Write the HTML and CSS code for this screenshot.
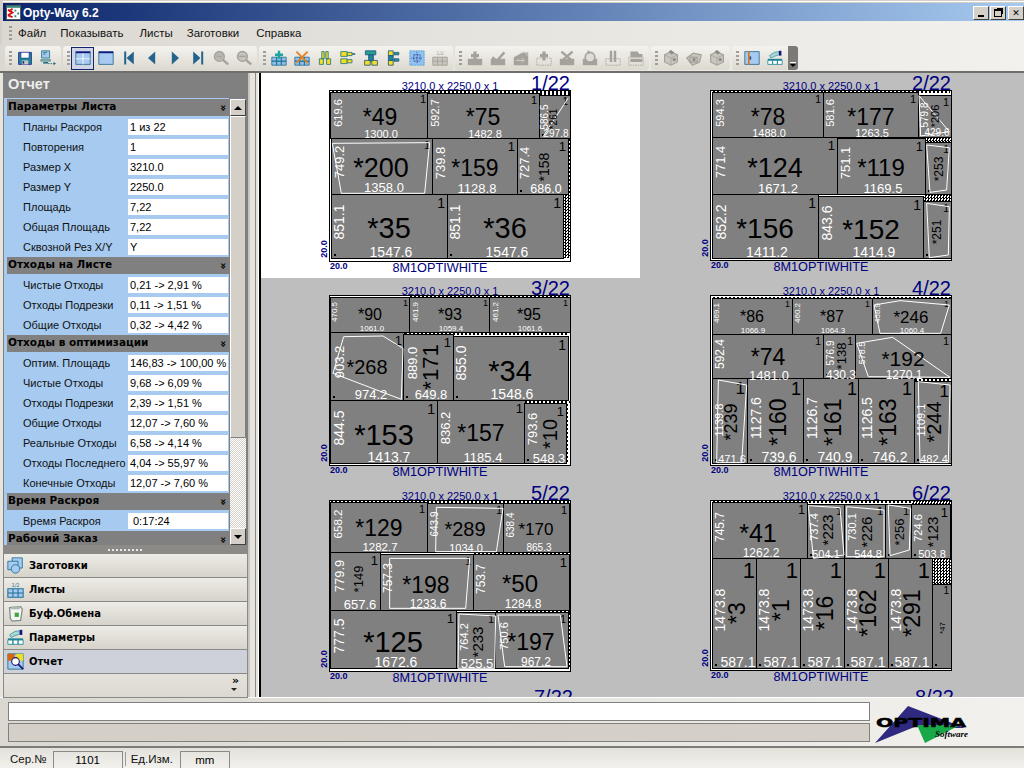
FILE: index.html
```html
<!DOCTYPE html>
<html lang="ru">
<head>
<meta charset="utf-8">
<title>Opty-Way 6.2</title>
<link rel="stylesheet" href="styles.css">
</head>
<body>
<svg class="sprite" width="0" height="0">
  <defs>
    <symbol id="i-save" viewBox="0 0 20 20"><path d="M2 3h16v15H2z" fill="#1f8496" stroke="#1a1a8c"/><path d="M5 3h10v7H5z" fill="#fff" stroke="#1a1a8c" stroke-width=".6"/><path d="M6 13h8v5H6z" fill="#c9c9c9"/><path d="M7 14h2v3H7z" fill="#1a1a8c"/></symbol>
    <symbol id="i-export" viewBox="0 0 20 20"><path d="M2 1h10v9H2z" fill="#a6caf0" stroke="#1f6f80"/><path d="M4 3h5M4 5h3" stroke="#1f6f80"/><path d="M1 12h12v2H1z" fill="#a0b8c0" stroke="#1f6f80" stroke-width=".7"/><path d="M4 15h6v2H4z" fill="#1f6f80"/><path d="M10 17h2M13 17h2M16 17h2" stroke="#1f6f80"/><path d="M17 15l3 2-3 2z" fill="#1f6f80"/></symbol>
    <symbol id="i-grid" viewBox="0 0 20 20"><path d="M1 2h18v16H1z" fill="#a6caf0" stroke="#24648c"/><path d="M1 2h18v2H1z" fill="#141480"/><path d="M10 4v14M1 11h18" stroke="#fff"/></symbol>
    <symbol id="i-single" viewBox="0 0 20 20"><path d="M1 2h18v16H1z" fill="#a6caf0" stroke="#24648c"/><path d="M1 2h18v2H1z" fill="#141480"/></symbol>
    <symbol id="i-first" viewBox="0 0 20 20"><path d="M4 2h2.500v16H4zM16 2v16L7 10z" fill="#24648c"/></symbol>
    <symbol id="i-prev" viewBox="0 0 20 20"><path d="M14 2v16L5 10z" fill="#24648c"/></symbol>
    <symbol id="i-next" viewBox="0 0 20 20"><path d="M6 2v16l9-8z" fill="#24648c"/></symbol>
    <symbol id="i-last" viewBox="0 0 20 20"><path d="M4 2v16l9-8zM14 2h2.500v16H14z" fill="#24648c"/></symbol>
    <symbol id="i-zoomin" viewBox="0 0 20 20"><circle cx="8" cy="8" r="6" fill="#c9c6be" stroke="#a5a29b" stroke-width="2"/><path d="M5 8h6" stroke="#a5a29b" stroke-width="2"/><path d="M5 5h6v6H5z" fill="none" stroke="#a5a29b"/><path d="M12 12l7 6" stroke="#a5a29b" stroke-width="3"/></symbol>
    <symbol id="i-zoomout" viewBox="0 0 20 20"><circle cx="8" cy="8" r="6" fill="#c9c6be" stroke="#a5a29b" stroke-width="2"/><path d="M4 8h8" stroke="#a5a29b" stroke-width="2"/><path d="M12 12l7 6" stroke="#a5a29b" stroke-width="3"/></symbol>
    <symbol id="i-add" viewBox="0 0 20 20"><path d="M1 9h6v5H1zM7 9h6v5H7zM13 9h6v5h-6zM1 14h6v5H1zM7 14h6v5H7zM13 14h6v5h-6z" fill="#8fbfe6" stroke="#1f6f96"/><path d="M10 1v10M5 6h10" stroke="#1fa5a0" stroke-width="3"/></symbol>
    <symbol id="i-del" viewBox="0 0 20 20"><path d="M1 9h6v5H1zM7 9h6v5H7zM13 9h6v5h-6zM1 14h6v5H1zM7 14h6v5H7zM13 14h6v5h-6z" fill="#8fbfe6" stroke="#1f6f96"/><path d="M3 2l14 14M17 2L3 16" stroke="#e8801c" stroke-width="2.200"/></symbol>
    <symbol id="i-cols" viewBox="0 0 20 20"><path d="M6 2h3v9H6zM11 2h3v9h-3zM3 11h5v7H3zM12 11h5v7h-5z" fill="#f0e020" stroke="#1f6f80"/></symbol>
    <symbol id="i-rows" viewBox="0 0 20 20"><path d="M1 2h8v6H1zM1 11h8v6H1z" fill="#f0e020" stroke="#1f6f80"/><path d="M9 3h6v4H9zM9 12h6v4H9z" fill="#f0e020" stroke="#1f6f80"/><path d="M15 4h4v2h-4z" fill="#1f6f80"/></symbol>
    <symbol id="i-cut1" viewBox="0 0 20 20"><path d="M3 1h13v5H3z" fill="#22a090" stroke="#1f4f80"/><path d="M7 6h6v8H7z" fill="#1f8496" stroke="#1f4f80"/><path d="M2 13h7v6H2zM11 13h7v6h-7z" fill="#f0e020" stroke="#1f4f80"/></symbol>
    <symbol id="i-cut2" viewBox="0 0 20 20"><path d="M3 1h6v6H3zM3 13h6v6H3z" fill="#f0e020" stroke="#1f4f80"/><path d="M3 7h6v6H3z" fill="#1f8496" stroke="#1f4f80"/><path d="M10 3h6v3h-6zM10 11h6v3h-6z" fill="#22a090" stroke="#1f4f80"/></symbol>
    <symbol id="i-dots" viewBox="0 0 20 20"><path d="M1 1h18v18H1z" fill="#8fc4f0"/><path d="M1 1h18v18H1z" fill="none" stroke="#2b7cc4" stroke-width="1" stroke-dasharray="1 1"/><path d="M10 3v14M3 10h14M6 6v8M14 6v8M6 6h8M6 14h8" stroke="#141480" stroke-dasharray="1 1"/></symbol>
    <symbol id="i-half" viewBox="0 0 20 20"><text x="10" y="6.500" class="ic-txt">1/2</text><path d="M1 9h18v10H1zM7 9v10M13 9v10M1 14h18" fill="#c9c6be" stroke="#a5a29b" stroke-width="1.200"/></symbol>
    <symbol id="g-plus" viewBox="0 0 20 20"><path d="M1 11h18v8H1z" fill="#a5a29b"/><path d="M10 2v11M5 7h10" stroke="#a5a29b" stroke-width="4"/></symbol>
    <symbol id="g-check" viewBox="0 0 20 20"><path d="M1 11h18v8H1z" fill="#a5a29b"/><path d="M3 9l5 5L18 3" fill="none" stroke="#a5a29b" stroke-width="3"/></symbol>
    <symbol id="g-arrow" viewBox="0 0 20 20"><path d="M1 9L12 3l7 0v16H1z" fill="#a5a29b"/><path d="M4 13h9M11 10l3 3-3 3" fill="none" stroke="#dfdcd5"/><path d="M9 3l6-1 3 5" fill="none" stroke="#dfdcd5"/></symbol>
    <symbol id="g-dplus" viewBox="0 0 20 20"><path d="M1 10h18v9H1z" fill="none" stroke="#a5a29b" stroke-dasharray="2 1"/><path d="M10 2v11M5 7h10" stroke="#a5a29b" stroke-width="4"/></symbol>
    <symbol id="g-x" viewBox="0 0 20 20"><path d="M1 11h18v8H1z" fill="#a5a29b"/><path d="M3 2l14 12M17 2L3 14" stroke="#a5a29b" stroke-width="3"/></symbol>
    <symbol id="g-rot" viewBox="0 0 20 20"><path d="M1 11h18v8H1z" fill="#a5a29b"/><circle cx="10" cy="9" r="6" fill="#dfdcd5" stroke="#a5a29b" stroke-width="2"/><path d="M7 0l4 3-4 2z" fill="#a5a29b"/></symbol>
    <symbol id="g-bars" viewBox="0 0 20 20"><path d="M1 11h18v8H1z" fill="none" stroke="#a5a29b" stroke-dasharray="2 1"/><path d="M6 1h3v14H6zM11 1h3v14h-3z" fill="#a5a29b"/></symbol>
    <symbol id="g-hbars" viewBox="0 0 20 20"><path d="M1 9h18v10H1z" fill="none" stroke="#a5a29b" stroke-dasharray="2 1"/><path d="M3 2h9l2 3h4v4H3zM3 11h15v4H3z" fill="#a5a29b"/></symbol>
    <symbol id="g-cube" viewBox="0 0 20 20"><path d="M2 6l8-4 8 4v9l-8 4-8-4z" fill="#c9c6be" stroke="#a5a29b" stroke-width="1.500"/><path d="M2 6l8 4 8-4M10 10v9" fill="none" stroke="#a5a29b"/><path d="M7 2l3-2 4 3-3 3z" fill="#8d8a84"/><circle cx="14" cy="12" r="2" fill="#8d8a84"/></symbol>
    <symbol id="g-cube2" viewBox="0 0 20 20"><path d="M1 10l8-6 10 2-2 9-9 4z" fill="#c9c6be" stroke="#a5a29b" stroke-width="1.500"/><path d="M5 9h9v6H5z" fill="none" stroke="#8d8a84"/><circle cx="10" cy="12" r="2" fill="#8d8a84"/></symbol>
    <symbol id="i-panel" viewBox="0 0 20 20"><path d="M1 2h18v16H1z" fill="#a6caf0" stroke="#24648c"/><path d="M5 2h2v16H5z" fill="#e8700c"/><path d="M7 8h2v4H7z" fill="#1f4f9a"/></symbol>
    <symbol id="i-params" viewBox="0 0 20 20"><path d="M3 7l6-4 6-1v4l-6 2-4 2z" fill="#a8d8d0" stroke="#1f8496" stroke-width=".8"/><path d="M15 1h3v6h-3z" fill="#141480"/><path d="M1 11h18v2H1z" fill="#1f8496"/><path d="M1 13h6v5H1zM7 13h6v5H7zM13 13h6v5h-6z" fill="#fff" stroke="#1f8496"/></symbol>
    <symbol id="i-blanks" viewBox="0 0 20 20"><path d="M6 1h12v12H6z" fill="#a6caf0" stroke="#1f6f96"/><path d="M1 5h12v10H1z" fill="#a6caf0" stroke="#1f6f96"/><circle cx="10" cy="14" r="5" fill="#a6caf0" stroke="#1f6f96"/></symbol>
    <symbol id="i-sheets" viewBox="0 0 20 20"><text x="10" y="6.500" class="ic-txt ic-blue">1/2</text><path d="M1 9h18v10H1zM7 9v10M13 9v10M1 14h18" fill="#a6caf0" stroke="#1f6f96" stroke-width="1.200"/></symbol>
    <symbol id="i-clip" viewBox="0 0 20 20"><path d="M3 3l13-1 2 3-2 13-10 1-2-3z" fill="#f4f4f0" stroke="#7f8f8a" stroke-width="1.500"/><path d="M5 2h10v3H5z" fill="#a8b8b0"/><path d="M9 9h5v5H9z" fill="#3fa53f"/></symbol>
    <symbol id="i-report" viewBox="0 0 20 20"><path d="M1 1h18v18H1z" fill="#a6caf0" stroke="#1f6f80"/><path d="M1 1h8v8H1z" fill="#d8650c"/><path d="M11 1h8v8h-8z" fill="#f0e020"/><circle cx="10" cy="10" r="4.500" fill="#fff" stroke="#1a1a6c" stroke-width="1.300"/><path d="M13 13l6 6" stroke="#141480" stroke-width="2"/></symbol>
    <symbol id="i-app" viewBox="0 0 16 16"><path d="M.5.500h15v15H.5z" fill="#fff" stroke="#555"/><path d="M1 1h14v2H1z" fill="#2e8b7f"/><path d="M2 5l5 3-5 3M2 11l5 2M7 4L3 7" fill="none" stroke="#d21010" stroke-width="2"/><path d="M9 5h2v2H9zM12 8h2v2h-2zM9 11h2v2H9z" fill="#2e8b7f"/></symbol>
  </defs>
</svg>

<div class="app">
  <header class="titlebar">
    <svg class="app-icon"><use href="#i-app"/></svg>
    <span class="title-text">Opty-Way 6.2</span>
    <div class="win-btns">
      <button class="win-btn"><span class="wb-min"></span></button>
      <button class="win-btn"><span class="wb-max"></span></button>
      <button class="win-btn win-close">✕</button>
    </div>
  </header>

  <nav class="menubar">
    <span class="grip"></span>
    <span class="menu-item m1">Файл</span>
    <span class="menu-item m2">Показывать</span>
    <span class="menu-item m3">Листы</span>
    <span class="menu-item m4">Заготовки</span>
    <span class="menu-item m5">Справка</span>
  </nav>

  <div class="toolbar">
    <div class="tgroup">
      <span class="grip"></span>
      <span class="tbtn"><svg><use href="#i-save"/></svg></span>
      <span class="tbtn"><svg><use href="#i-export"/></svg></span>
    </div>
    <div class="tgroup">
      <span class="grip"></span>
      <span class="tbtn active"><svg><use href="#i-grid"/></svg></span>
      <span class="tbtn"><svg><use href="#i-single"/></svg></span>
      <span class="tbtn"><svg><use href="#i-first"/></svg></span>
      <span class="tbtn"><svg><use href="#i-prev"/></svg></span>
      <span class="tbtn"><svg><use href="#i-next"/></svg></span>
      <span class="tbtn"><svg><use href="#i-last"/></svg></span>
      <span class="tbtn"><svg><use href="#i-zoomin"/></svg></span>
      <span class="tbtn"><svg><use href="#i-zoomout"/></svg></span>
    </div>
    <div class="tgroup">
      <span class="grip"></span>
      <span class="tbtn"><svg><use href="#i-add"/></svg></span>
      <span class="tbtn"><svg><use href="#i-del"/></svg></span>
      <span class="tbtn"><svg><use href="#i-cols"/></svg></span>
      <span class="tbtn"><svg><use href="#i-rows"/></svg></span>
      <span class="tbtn"><svg><use href="#i-cut1"/></svg></span>
      <span class="tbtn"><svg><use href="#i-cut2"/></svg></span>
      <span class="tbtn"><svg><use href="#i-dots"/></svg></span>
      <span class="tbtn"><svg><use href="#i-half"/></svg></span>
    </div>
    <div class="tgroup">
      <span class="grip"></span>
      <span class="tbtn"><svg><use href="#g-plus"/></svg></span>
      <span class="tbtn"><svg><use href="#g-check"/></svg></span>
      <span class="tbtn"><svg><use href="#g-arrow"/></svg></span>
      <span class="tbtn"><svg><use href="#g-dplus"/></svg></span>
      <span class="tbtn"><svg><use href="#g-x"/></svg></span>
      <span class="tbtn"><svg><use href="#g-rot"/></svg></span>
      <span class="tbtn"><svg><use href="#g-bars"/></svg></span>
      <span class="tbtn"><svg><use href="#g-hbars"/></svg></span>
    </div>
    <div class="tgroup">
      <span class="grip"></span>
      <span class="tbtn"><svg><use href="#g-cube"/></svg></span>
      <span class="tbtn"><svg><use href="#g-cube2"/></svg></span>
      <span class="tbtn"><svg><use href="#g-cube"/></svg></span>
    </div>
    <div class="tgroup">
      <span class="grip"></span>
      <span class="tbtn"><svg><use href="#i-panel"/></svg></span>
      <span class="tbtn"><svg><use href="#i-params"/></svg></span>
    </div>
    <div class="overflow"><span class="ov-line"></span><span class="ov-arrow"></span></div>
  </div>

  <main class="main">
    <aside class="side">
      <div class="side-title">Отчет</div>
      <div class="props-frame">
        <div class="props">
          <div class="sec">Параметры Листа<span class="chev">»</span></div>
          <div class="row"><span class="lbl">Планы Раскроя</span><span class="val">1 из 22</span></div>
          <div class="row"><span class="lbl">Повторения</span><span class="val">1</span></div>
          <div class="row"><span class="lbl">Размер X</span><span class="val">3210.0</span></div>
          <div class="row"><span class="lbl">Размер Y</span><span class="val">2250.0</span></div>
          <div class="row"><span class="lbl">Площадь</span><span class="val">7,22</span></div>
          <div class="row"><span class="lbl">Общая Площадь</span><span class="val">7,22</span></div>
          <div class="row"><span class="lbl">Сквозной Рез X/Y</span><span class="val">Y</span></div>
          <div class="sec">Отходы на Листе<span class="chev">»</span></div>
          <div class="row"><span class="lbl">Чистые Отходы</span><span class="val">0,21 -&gt; 2,91 %</span></div>
          <div class="row"><span class="lbl">Отходы Подрезки</span><span class="val">0,11 -&gt; 1,51 %</span></div>
          <div class="row"><span class="lbl">Общие Отходы</span><span class="val">0,32 -&gt; 4,42 %</span></div>
          <div class="sec">Отходы в оптимизации<span class="chev">»</span></div>
          <div class="row"><span class="lbl">Оптим. Площадь</span><span class="val">146,83 -&gt; 100,00 %</span></div>
          <div class="row"><span class="lbl">Чистые Отходы</span><span class="val">9,68 -&gt; 6,09 %</span></div>
          <div class="row"><span class="lbl">Отходы Подрезки</span><span class="val">2,39 -&gt; 1,51 %</span></div>
          <div class="row"><span class="lbl">Общие Отходы</span><span class="val">12,07 -&gt; 7,60 %</span></div>
          <div class="row"><span class="lbl">Реальные Отходы</span><span class="val">6,58 -&gt; 4,14 %</span></div>
          <div class="row"><span class="lbl">Отходы Последнего</span><span class="val">4,04 -&gt; 55,97 %</span></div>
          <div class="row"><span class="lbl">Конечные Отходы</span><span class="val">12,07 -&gt; 7,60 %</span></div>
          <div class="sec">Время Раскроя<span class="chev">»</span></div>
          <div class="row"><span class="lbl">Время Раскроя</span><span class="val val-time">0:17:24</span></div>
          <div class="sec">Рабочий Заказ<span class="chev">»</span></div>
        </div>
        <div class="vscroll">
          <span class="sb-btn"><span class="tri-up"></span></span>
          <span class="sb-thumb"></span>
          <span class="sb-track"></span>
          <span class="sb-btn"><span class="tri-down"></span></span>
        </div>
      </div>
      <div class="nav-grip"><span class="nav-dots"></span></div>
      <div class="nav-row"><svg><use href="#i-blanks"/></svg>Заготовки</div>
      <div class="nav-row"><svg><use href="#i-sheets"/></svg>Листы</div>
      <div class="nav-row"><svg><use href="#i-clip"/></svg>Буф.Обмена</div>
      <div class="nav-row"><svg><use href="#i-params"/></svg>Параметры</div>
      <div class="nav-row nav-active"><svg><use href="#i-report"/></svg>Отчет</div>
      <div class="nav-foot"><span class="nav-more">»</span><span class="tri-more"></span></div>
    </aside>
    <div class="splitter"></div>
    <section class="canvas" id="canvas"></section>
  </main>

  <div class="bottom">
    <div class="inputs">
      <div class="in-white"></div>
      <div class="in-gray"></div>
    </div>
    <svg class="logo" viewBox="0 0 100 44">
      <polygon points="0,39 33,2 90,24 50,24 42,22" fill="#2f2a80"/>
      <polygon points="42,21 85,21 50,39" fill="#18a848"/>
      <text x="1" y="23" class="logo-main" textLength="90" lengthAdjust="spacingAndGlyphs">OPTIMA</text>
      <text x="60" y="33" class="logo-sub" textLength="33" lengthAdjust="spacingAndGlyphs">Software</text>
    </svg>
  </div>

  <footer class="status">
    <span class="st-lbl st-a">Сер.№</span>
    <span class="st-box st-b1">1101</span>
    <span class="st-sep"></span>
    <span class="st-lbl st-c">Ед.Изм.</span>
    <span class="st-box st-b2">mm</span>
  </footer>
</div>
<script src="script.js"></script>
</body>
</html>
```

FILE: styles.css
```css
* { box-sizing: border-box; }
html, body { margin: 0; padding: 0; }
body {
  width: 1024px; height: 768px; overflow: hidden;
  background: #e6e4dd;
  font: 12px "Liberation Sans", Arial, sans-serif;
  color: #000;
}
.sprite { position: absolute; }
.ic-txt { font: 6px "DejaVu Sans", sans-serif; text-anchor: middle; fill: #a5a29b; }
.ic-blue { fill: #1f6f96; }
.app { display: flex; flex-direction: column; height: 768px; }

/* title */
.titlebar {
  height: 21px; flex: none; display: flex; align-items: center;
  border-top: 1px solid #d4d0c8; border-left: 3px solid #d4d0c8;
  box-shadow: inset 0 1px 0 #fff, inset 0 2px 0 #d4d0c8;
  padding: 3px 0 0 3px;
  background: linear-gradient(90deg, #0a246a 0, #a6caf0 100%);
}
.app-icon { width: 15px; height: 15px; flex: none; }
.title-text { margin-left: 2px; color: #fff; font: bold 12px "Liberation Sans", sans-serif; }
.win-btns { margin-left: auto; display: flex; gap: 1px; align-items: center; }
.win-btn {
  width: 16px; height: 14px; padding: 0; display: flex; align-items: center; justify-content: center;
  background: #d4d0c8; border: 1px solid; border-color: #fff #404040 #404040 #fff;
  font: bold 9px "DejaVu Sans", sans-serif; color: #000;
}
.win-close { margin-left: 1px; }
.wb-min { width: 6px; height: 2px; background: #000; margin-top: 6px; }
.wb-max { width: 8px; height: 8px; border: 1px solid #000; border-top-width: 2px; box-shadow: 2px -2px 0 -1px #000; }

/* menu */
.menubar {
  height: 24px; flex: none; display: flex; align-items: center; padding-left: 7px;
  background: linear-gradient(90deg, #dbd8d1, #f2f1ed);
  border-left: 2px solid #d4d0c8;
}
.grip {
  width: 3px; height: 14px; flex: none; margin: 0 3px 0 0;
  background: repeating-linear-gradient(180deg, #a09d96 0 2px, transparent 2px 4px);
}
.menu-item { font-size: 11.500px; color: #111; }
.m1 { margin-left: 3px; }
.m2 { margin-left: 14px; }
.m3 { margin-left: 16px; }
.m4 { margin-left: 14px; }
.m5 { margin-left: 17px; }

/* toolbar */
.toolbar {
  height: 28px; flex: none; display: flex; gap: 2px; padding: 1px 0 1px 5px;
  background: linear-gradient(90deg, #dbd8d1, #f2f1ed);
  border-bottom: 2px solid #6f6e6a;
}
.tgroup {
  display: flex; align-items: center; padding: 0 2px 0 4px; border-radius: 3px;
  background: linear-gradient(180deg, #f4f3ef, #dcd9d0);
}
.tgroup .grip { margin: 0 1px 0 0; }
.tbtn { width: 23px; height: 23px; display: flex; align-items: center; justify-content: center; flex: none; }
.tbtn svg { width: 16px; height: 16px; }
.tbtn.active { background: #d0d4e4; border: 1px solid #14246c; }
.overflow {
  width: 10px; margin-left: -2px; border-radius: 0 3px 3px 0; background: #7b7a76;
  display: flex; flex-direction: column; align-items: center; justify-content: flex-end; padding-bottom: 3px; gap: 1px;
}
.ov-line { width: 6px; height: 1px; background: #fff; }
.ov-arrow { width: 0; height: 0; border: 3px solid transparent; border-top: 3px solid #000; border-bottom: 0; }

/* main */
.main { flex: none; height: 624px; display: flex; }
.side { width: 245px; margin-left: 3px; flex: none; display: flex; flex-direction: column; background: #e6e4dd; }
.side-title {
  height: 24px; flex: none; background: #808080; color: #ededed;
  font: bold 14.500px "Liberation Sans", sans-serif; padding: 3px 0 0 5px;
}
.props-frame {
  height: 448px; flex: none; display: flex; padding: 1px 0 0 3px;
  border: 1px solid #808080; border-width: 1px 1px 0 1px;
  background: linear-gradient(90deg, #a6caf0 0 225px, #808080 225px);
}
.props { width: 222px; flex: none; overflow: hidden; }
.sec {
  height: 18px; padding: 1px 1px 0 1px; background: #808080; border-bottom: 1px solid #a6caf0;
  font: bold 10.500px "DejaVu Sans", sans-serif; color: #000; display: flex; justify-content: space-between; white-space: nowrap;
}
.chev { transform: rotate(90deg); font: bold 11px "DejaVu Sans", sans-serif; width: 9px; margin-right: 2px; line-height: 14px; text-align: center; }
.row { height: 20px; display: flex; align-items: center; background: #a6caf0; padding-left: 16px; }
.lbl { width: 105px; flex: none; color: #111; white-space: nowrap; font-size: 11px; }
.val { width: 100px; height: 16px; background: #fff; padding-left: 2px; line-height: 16px; white-space: nowrap; font-size: 11px; }
.val-time { padding-left: 5px; }
.vscroll { width: 16px; margin-left: 1px; flex: none; display: flex; flex-direction: column; }
.sb-btn {
  height: 17px; flex: none; background: #d4d0c8; border: 1px solid; border-color: #fff #404040 #404040 #fff;
  display: flex; align-items: center; justify-content: center;
}
.tri-up { border: 4px solid transparent; border-bottom: 4px solid #000; border-top: 0; }
.tri-down { border: 4px solid transparent; border-top: 4px solid #000; border-bottom: 0; }
.sb-thumb { height: 322px; flex: none; background: #d4d0c8; border: 1px solid; border-color: #fff #808080 #808080 #fff; }
.sb-track { flex: 1; background: repeating-conic-gradient(#d4d0c8 0 25%, #fff 0 50%) 0 0 / 2px 2px; }
.nav-grip {
  height: 9px; flex: none; background: #8b8a86; display: flex; align-items: center; justify-content: center;
}
.nav-dots { width: 36px; height: 2px; background: repeating-linear-gradient(90deg, #e8e8e8 0 2px, transparent 2px 4px); }
.nav-row {
  height: 24px; flex: none; display: flex; align-items: center; gap: 5px; padding-left: 3px;
  font: bold 10px "DejaVu Sans", sans-serif; color: #000;
  background: linear-gradient(180deg, #eeece6, #d6d3cb);
  border-bottom: 1px solid #8a8a88; border-left: 1px solid #8a8a88; border-right: 1px solid #8a8a88;
}
.nav-row svg { width: 17px; height: 17px; flex: none; }
.nav-active { background: #cfd1da; }
.nav-foot {
  height: 24px; flex: none; position: relative; border: 1px solid #8a8a88; border-top: 0;
  background: linear-gradient(180deg, #e4e2db, #dcd9d1);
  display: flex; flex-direction: column; align-items: flex-end; padding: 2px 8px 0 0;
}
.nav-more { font: bold 11px/10px "DejaVu Sans", sans-serif; }
.tri-more { border: 3px solid transparent; border-top: 3px solid #222; border-bottom: 0; margin: 2px 2px 0 0; }
.splitter {
  width: 11px; flex: none; background: #e6e4dd;
  border-right: 1px solid #fff; box-shadow: inset 2px 0 0 #c8c6c0, inset 7px 0 0 #e6e4dd, inset 8px 0 0 #8b8a86;
}
.canvas {
  flex: 1; position: relative; overflow: hidden; background: #bebebe;
  border-left: 2px solid #000;
  font-family: "Liberation Sans", Arial, sans-serif;
}

/* sheets */
.selected-sheet { position: absolute; background: #fff; }
.sheet { position: absolute; background: #fff; border: 1px solid #000; }
.piece { position: absolute; background: #808080; box-shadow: 0 0 0 1px #000; }
.waste { position: absolute; background: repeating-conic-gradient(#000 0 25%, #fff 0 50%) 0 0 / 3px 3px; }
.waste-h { position: absolute; background: repeating-linear-gradient(90deg, #000 0 2px, #fff 2px 4px) 0 0 / 100% 2px no-repeat; }
.waste-v { position: absolute; background: repeating-linear-gradient(180deg, #000 0 2px, #fff 2px 4px) 0 0 / 2px 100% no-repeat; }
.sheet svg { position: absolute; left: 0; top: 0; overflow: visible; pointer-events: none; }
.cut-line { fill: none; stroke: #fff; stroke-width: 1; }
.tx { position: absolute; line-height: 1; white-space: nowrap; transform: translate(-50%, -50%); }
.tx-v { transform: translate(-50%, -50%) rotate(-90deg); }
.tx-id { color: #000; }
.tx-dim { color: #fff; }
.tx-one { position: absolute; color: #000; line-height: 1; right: 2px; top: 1px; }
.dot { position: absolute; width: 2px; height: 2px; background: #000; left: 2px; bottom: 2px; }
.sheet-dim, .sheet-num, .sheet-mat, .sheet-m1, .sheet-m2 { position: absolute; color: #000080; line-height: 1; white-space: nowrap; }
.sheet-dim { font-size: 11px; left: 50%; top: -10px; transform: translateX(-50%); }
.sheet-num { font-size: 20px; right: 0; top: -18px; }
.sheet-mat { font-size: 12.700px; left: 50%; bottom: -14px; transform: translateX(calc(-50% - 10px)); }
.sheet-m1 { font: bold 9px "Liberation Sans", sans-serif; left: 0; bottom: -10px; }
.sheet-m2 { font: bold 9px "Liberation Sans", sans-serif; left: -6px; bottom: 7px; transform: translateX(-50%) rotate(-90deg); }

/* bottom */
.bottom {
  height: 51px; flex: none; display: flex; padding: 4px 0 0 8px;
  background: linear-gradient(90deg, #dbd8d1, #f2f1ed);
  border-top: 1px solid #fff; border-bottom: 2px solid #7d7c78;
}
.inputs { width: 862px; flex: none; display: flex; flex-direction: column; gap: 2px; }
.in-white { height: 19px; background: #fff; border: 1px solid #808080; }
.in-gray { height: 19px; background: #d4d0c8; border: 1px solid #808080; }
.logo { width: 100px; height: 44px; margin: 2px 0 0 5px; flex: none; }
.logo-main { font: 900 13px "DejaVu Sans", sans-serif; fill: #000; stroke: #000; stroke-width: .5; }
.logo-sub { font: italic bold 8px "Liberation Serif", serif; fill: #000; }

/* status */
.status {
  flex: 1; display: flex; align-items: flex-end; padding-left: 10px;
  background: linear-gradient(180deg, #e3e1da, #f2f1ed);
  font-size: 11.500px;
}
.st-lbl { height: 17px; line-height: 17px; color: #111; }
.st-box {
  height: 17px; line-height: 17px; text-align: center; border: 1px solid #8a8a88; border-bottom: 0;
}
.st-b1 { width: 70px; margin-left: 6px; }
.st-sep { width: 1px; height: 14px; margin: 0 5px 2px 2px; background: #9a9a98; }
.st-b2 { width: 50px; margin-left: 7px; }
```

FILE: script.js
```js
// Each sheet is described in coordinates of a 3x view with origin o; values are divided by 3 here.
// Piece tuple: x1,y1,x2,y2, id,idSize,idX,idY, w,wSize,wX,wY, h,hSize,hX,hY, oneSize, opts{v,d,p}
var CANVAS_X = 261, CANVAS_Y = 73;
var SHEETS = [
  { o:[320,80], b:[28,30,755,545], n:'1/22', sel:true, waste:[[36,33,750,38],[733,345,752,535],[745,178,752,343],[660,40,750,48]], pieces:[
    [34,38,325,175,'*49',23,180,110,'1300.0',11,183,162,'619.6',11,55,98,11],
    [325,42,658,175,'*75',23,490,110,'1482.8',11,495,162,'592.7',11,345,100,11],
    [660,48,750,175,'*261',10,703,118,'297.8',10,710,162,'586.5',10,677,110,10,{v:1,d:1,p:[[745,55,670,170]]}],
    [36,178,338,343,'*200',27,185,265,'1358.0',13,193,322,'749.2',13,57,247,11,{p:[[38,190,330,188,315,340,65,340,38,190]]}],
    [340,178,592,343,'*159',23,466,265,'1128.8',13,473,325,'739.8',13,360,250,13],
    [594,178,745,343,'*158',14,672,262,'686.0',12.5,680,327,'727.4',13,612,250,13,{v:1,d:1}],
    [36,345,382,535,'*35',29,208,445,'1547.6',14,214,517,'851.1',14,57,425,14,{d:1}],
    [385,345,730,535,'*36',29,556,445,'1547.6',14,562,517,'851.1',14,405,425,14,{d:1}]
  ]},
  { o:[700,75], b:[30,45,757,558], n:'2/22', waste:[[40,47,750,53],[372,47,655,55],[678,188,752,205],[672,360,752,380]], pieces:[
    [38,55,370,186,'*78',23,203,125,'1488.0',11,207,174,'594.3',11,59,115,11],
    [372,55,655,186,'*177',23,513,125,'1263.5',11,517,174,'581.6',11,389,115,11],
    [657,62,752,186,'*206',11,706,122,'429.6',10,712,174,'579.8',10,675,120,11,{v:1,p:[[657,62,748,170,662,183,657,62]]}],
    [38,188,412,357,'*124',27,225,280,'1671.2',13,233,340,'771.4',13,60,260,13],
    [413,192,676,357,'*119',24,543,280,'1169.5',13,550,340,'751.1',13,435,265,13],
    [678,205,752,357,'*253',12,716,282,'',0,0,0,'',0,0,0,11,{v:1,d:1,p:[[680,210,748,218,740,345,690,352,680,210]]}],
    [38,360,355,550,'*156',28,195,462,'1411.2',14,202,532,'852.2',14,62,440,14],
    [356,365,670,550,'*152',28,512,465,'1414.9',14,522,532,'843.6',14,380,443,14],
    [672,382,752,550,'*251',12,712,470,'',0,0,0,'',0,0,0,11,{v:1,d:1,p:[[680,385,748,395,745,540,688,548,680,385]]}]
  ]},
  { o:[320,280], b:[28,45,755,558], n:'3/22', waste:[[270,47,750,53],[255,158,400,165],[400,160,745,168],[617,363,750,372],[740,373,752,550]], pieces:[
    [35,53,270,155,'*90',16,150,105,'1061.0',8,157,147,'470.5',8,47,97,9],
    [272,55,510,155,'*93',16,390,105,'1059.4',8,393,147,'461.9',8,288,97,9],
    [512,55,750,155,'*95',16,627,105,'1061.6',8,630,147,'461.2',8,528,97,9],
    [35,158,252,360,'*268',20,142,262,'974.2',13,155,343,'903.2',13,57,245,13,{d:1,p:[[72,170,190,168,250,205,245,358,40,280,72,170]]}],
    [254,165,400,360,'*171',22,335,262,'649.8',13,335,343,'889.0',13,276,250,13,{v:1,d:1}],
    [402,170,745,360,'*34',29,572,272,'1548.6',14,578,343,'855.0',14,423,250,14,{d:1}],
    [35,363,352,550,'*153',29,192,465,'1413.7',14,207,532,'844.5',14,57,443,14],
    [354,363,615,550,'*157',23,484,458,'1185.4',13,490,532,'836.2',13,375,443,13],
    [617,373,738,550,'*10',20,690,462,'548.3',13,688,534,'793.6',13,636,447,13,{v:1,d:1}]
  ]},
  { o:[700,280], b:[30,45,757,558], n:'4/22', waste:[[38,50,752,56],[645,298,752,305]], pieces:[
    [38,58,277,162,'*86',16,155,110,'1066.9',8,160,152,'469.1',8,52,100,9],
    [279,58,517,162,'*87',16,395,110,'1064.3',8,400,152,'460.2',8,293,100,9],
    [519,58,752,162,'*246',17,633,112,'1060.4',8,635,152,'458.9',8,533,100,9,{p:[[522,75,600,62,748,75,722,160,540,160,522,75]]}],
    [38,165,368,295,'*74',23,203,232,'1481.0',13,207,284,'592.4',12,60,222,11],
    [371,165,465,295,'*138',13,423,228,'430.3',12,422,284,'576.9',10,392,220,11,{v:1,d:1}],
    [468,165,752,295,'*192',21,610,235,'1270.1',12,612,284,'578.5',9,486,220,11,{p:[[470,190,578,172,750,292,505,290,470,190]]}],
    [38,298,142,548,'*239',18,93,425,'471.6',11,97,538,'1139.8',11,58,420,17,{v:1,d:1,p:[[55,300,140,315,125,548,50,548,55,300]]}],
    [145,298,310,548,'*160',23,235,425,'739.6',14,238,530,'1127.6',14,167,415,18,{v:1,d:1}],
    [312,298,476,548,'*161',23,400,425,'740.9',14,405,530,'1126.7',14,335,415,18,{v:1,d:1}],
    [478,298,642,548,'*163',23,565,425,'746.2',14,570,530,'1126.5',14,500,415,18,{v:1,d:1}],
    [645,305,752,548,'*244',20,703,425,'482.4',11,702,538,'1109.1',11,663,420,17,{v:1,d:1,p:[[655,305,750,315,745,548,660,548,655,305]]}]
  ]},
  { o:[320,490], b:[28,30,755,545], n:'5/22', waste:[[34,32,752,38],[325,38,552,42],[554,38,748,42],[462,188,752,195],[530,362,752,368],[745,368,752,535]], pieces:[
    [34,38,322,187,'*129',23,178,115,'1282.7',11.500,180,173,'658.2',11.500,57,103,11],
    [325,42,552,187,'*289',20,437,118,'1034.0',11,440,173,'643.9',10,345,103,11,{p:[[350,52,550,55,530,185,348,185,350,52]]}],
    [554,42,748,187,'*170',17,650,118,'865.3',10,657,173,'638.4',10,573,105,11],
    [34,190,182,360,'*149',13,115,268,'657.6',13,120,343,'779.9',13,57,258,13,{v:1}],
    [184,195,460,360,'*198',23,320,285,'1233.6',12,325,343,'757.3',12,205,265,11,{p:[[210,205,450,205,438,355,210,355,210,205]]}],
    [462,195,748,360,'*50',24,600,283,'1284.8',12,610,343,'753.7',12,484,268,13],
    [34,363,410,535,'*125',29,220,455,'1672.6',14,230,517,'777.5',14,57,437,13],
    [413,370,528,535,'*233',15,473,455,'525.5',13,473,520,'764.2',11,432,440,11,{v:1,p:[[418,372,528,378,525,535,415,535,418,372]]}],
    [530,368,745,535,'*197',23,635,455,'967.2',12,648,517,'750.6',11,552,437,11,{p:[[535,375,722,375,742,530,555,530,535,375]]}]
  ]},
  { o:[700,485], b:[30,45,757,558], n:'6/22', waste:[[635,47,752,60],[38,47,635,53],[699,222,752,297]], pieces:[
    [38,55,322,220,'*41',25,175,145,'1262.2',12,182,205,'745.7',12,60,125,12],
    [324,60,432,220,'*223',15,380,135,'504.1',11,378,208,'737.4',11,342,125,11,{v:1,d:1,p:[[325,62,420,68,432,210,340,220,325,62]]}],
    [434,60,556,220,'*226',15,497,140,'544.8',11,503,208,'730.1',11,455,125,11,{v:1,p:[[440,65,552,75,552,215,440,215,440,65]]}],
    [558,60,634,220,'*256',13,596,140,'',0,0,0,'',0,0,0,11,{v:1,d:1,p:[[565,60,632,70,628,195,570,212,565,60]]}],
    [636,60,750,220,'*123',15,695,140,'503.8',11,697,208,'724.6',11,655,130,13,{v:1,d:1}],
    [38,223,170,548,'*3',23,110,385,'587.1',14,113,532,'1473.8',14,60,375,22,{v:1,d:1}],
    [172,223,301,548,'*1',23,243,375,'587.1',14,243,532,'1473.8',14,192,375,22,{v:1,d:1}],
    [303,223,433,548,'*16',23,375,385,'587.1',14,375,532,'1473.8',14,323,375,22,{v:1,d:1}],
    [435,223,565,548,'*162',23,505,385,'587.1',14,505,532,'1473.8',14,455,375,22,{v:1,d:1}],
    [567,223,697,548,'*291',23,635,385,'587.1',14,635,532,'1473.8',14,587,375,22,{v:1,d:1}],
    [699,300,752,548,'*47',8,730,428,'',0,0,0,'',0,0,0,10,{v:1,d:1}]
  ]}
];
var FOOT_TITLES = [{ n:'7/22', right:571 }, { n:'8/22', right:952 }];

function el(cls, text) {
  var e = document.createElement('div');
  e.className = cls;
  if (text) e.textContent = text;
  return e;
}
function place(e, x, y, w, h) {
  e.style.left = x + 'px';
  e.style.top = y + 'px';
  if (w !== undefined) { e.style.width = w + 'px'; e.style.height = h + 'px'; }
}
function label(parent, cls, text, size, x, y) {
  if (!text) return;
  var t = el('tx ' + cls, text);
  t.style.fontSize = size + 'px';
  place(t, Math.round(x), Math.round(y));
  parent.appendChild(t);
}
var canvas = document.getElementById('canvas');
var SVGNS = 'http://www.w3.org/2000/svg';

SHEETS.forEach(function (s) {
  var ox = Math.round(s.o[0] + s.b[0] / 3 - CANVAS_X), oy = Math.round(s.o[1] + s.b[1] / 3 - CANVAS_Y);
  var bw = Math.round((s.b[2] - s.b[0]) / 3), bh = Math.round((s.b[3] - s.b[1]) / 3);
  if (s.sel) {
    var sel = el('selected-sheet');
    place(sel, 0, 0, 379, 205);
    canvas.appendChild(sel);
  }
  var sh = el('sheet');
  place(sh, ox, oy, bw, bh);
  var X = function (z) { return (z - s.b[0]) / 3 - 1; };
  var Y = function (z) { return (z - s.b[1]) / 3 - 1; };
  var box = function (e, r) {
    var x1 = Math.round(X(r[0])), y1 = Math.round(Y(r[1]));
    place(e, x1, y1, Math.round(X(r[2])) - x1, Math.round(Y(r[3])) - y1);
  };

  s.waste.forEach(function (w) {
    var dw = w[2] - w[0], dh = w[3] - w[1];
    var cls = dh <= 10 ? 'waste-h' : (dw <= 12 ? 'waste-v' : 'waste');
    var e = el(cls);
    box(e, w);
    sh.appendChild(e);
  });
  s.pieces.forEach(function (p) {
    var opt = p[17] || {};
    var e = el('piece');
    box(e, p);
    var one = el('tx-one', '1');
    one.style.fontSize = p[16] + 'px';
    e.appendChild(one);
    if (opt.d) e.appendChild(el('dot'));
    sh.appendChild(e);
  });
  var svg = document.createElementNS(SVGNS, 'svg');
  svg.setAttribute('width', bw);
  svg.setAttribute('height', bh);
  s.pieces.forEach(function (p) {
    var opt = p[17] || {};
    (opt.p || []).forEach(function (line) {
      var pl = document.createElementNS(SVGNS, 'polyline');
      var pts = [];
      for (var i = 0; i < line.length; i += 2) pts.push(X(line[i]) + ',' + Y(line[i + 1]));
      pl.setAttribute('points', pts.join(' '));
      pl.setAttribute('class', 'cut-line');
      svg.appendChild(pl);
    });
  });
  sh.appendChild(svg);
  s.pieces.forEach(function (p) {
    var opt = p[17] || {};
    label(sh, 'tx-id' + (opt.v ? ' tx-v' : ''), p[4], p[5], X(p[6]), Y(p[7]));
    label(sh, 'tx-dim', p[8], p[9], X(p[10]), Y(p[11]));
    label(sh, 'tx-dim tx-v', p[12], p[13], X(p[14]), Y(p[15]));
  });
  sh.appendChild(el('sheet-dim', '3210.0 x  2250.0 x 1'));
  sh.appendChild(el('sheet-num', s.n));
  sh.appendChild(el('sheet-mat', '8M1OPTIWHITE'));
  sh.appendChild(el('sheet-m1', '20.0'));
  sh.appendChild(el('sheet-m2', '20.0'));
  canvas.appendChild(sh);
});

FOOT_TITLES.forEach(function (f) {
  var t = el('sheet-num', f.n);
  place(t, f.right - CANVAS_X - 37, 687 - CANVAS_Y);
  t.style.right = 'auto';
  canvas.appendChild(t);
});
```
